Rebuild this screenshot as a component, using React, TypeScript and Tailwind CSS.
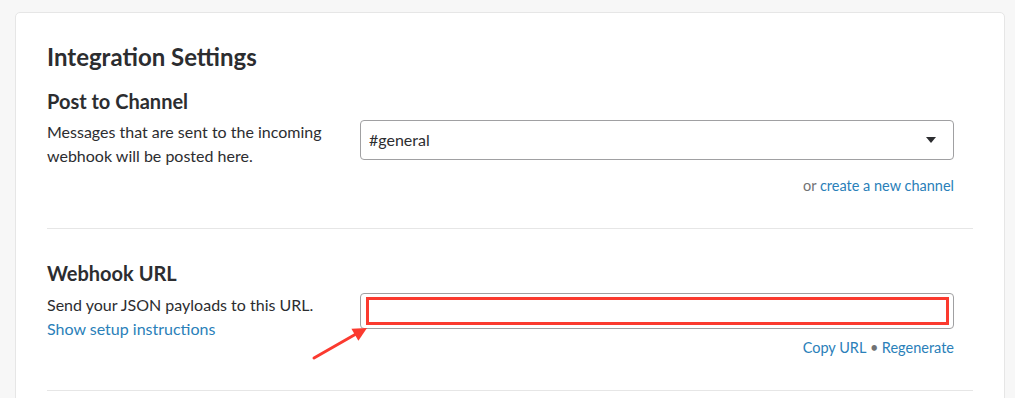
import { useState } from "react";

// Ajustes de la integración (webhook entrante)
const linkCls = "text-[#2a80b9] hover:underline cursor-pointer";

const Caret = () => (
  <svg width="10" height="6" viewBox="0 0 10 6" className="shrink-0">
    <path d="M0 0h10L5 6z" fill="#2c2d30" />
  </svg>
);

export default function App() {
  const [channel] = useState("#general");

  return (
    <div
      className="relative h-[398px] w-full overflow-hidden bg-[#f7f7f7] pl-[15px] pr-[10px] pt-[12px] text-[#2c2d30]"
      style={{ fontFamily: "Lato, 'Noto Sans', sans-serif" }}
    >
      <div className="rounded-[5px] border border-[#e6e6e6] bg-white px-[31px] pt-[29px]">
        <h1 className="text-[24px] leading-[30px] font-bold">Integration Settings</h1>

        {/* POST TO CHANNEL */}
        <section className="mt-[15px] pb-[30px] border-b border-[#e6e6e6]">
          <h2 className="text-[20px] leading-[28px] font-bold">Post to Channel</h2>
          <div className="mt-[5px] flex">
            <p className="w-[313px] text-[16px] leading-[24px]">
              Messages that are sent to the incoming webhook will be posted here.
            </p>
            <div className="w-[594px]">
              <div className="flex h-[40px] items-center justify-between rounded-[4px] border border-[#a0a0a2] pl-[8px] pr-[17px] text-[16px]">
                <span>{channel}</span>
                <Caret />
              </div>
              <div className="mt-[14px] text-right text-[14.5px] leading-[24px] text-[#717274]">
                or <span className={linkCls}>create a new channel</span>
              </div>
            </div>
          </div>
        </section>

        {/* WEBHOOK URL */}
        <section className="pt-[30px] pb-[30px] border-b border-[#e6e6e6]">
          <h2 className="text-[20px] leading-[28px] font-bold">Webhook URL</h2>
          <div className="mt-[6px] flex">
            <div className="w-[313px] text-[16px] leading-[24px]">
              <p>Send your JSON payloads to this URL.</p>
              <span className={linkCls}>Show setup instructions</span>
            </div>
            <div className="w-[594px]">
              <div className="h-[36px] rounded-[4px] border border-[#a0a0a2] pl-[5px] pr-[4px] py-[3px]">
                <div className="h-full border-[3px] border-[#fb3a2f]" />
              </div>
              <div className="mt-[7px] text-right text-[14.5px] leading-[24px] text-[#717274]">
                <span className={linkCls}>Copy URL</span>
                <span className="mx-[3.5px]">•</span>
                <span className={linkCls}>Regenerate</span>
              </div>
            </div>
          </div>
        </section>
        <div className="h-[20px]" />
      </div>

      {/* flecha de anotación */}
      <svg className="pointer-events-none absolute left-0 top-0" width="1015" height="398">
        <line x1="314" y1="358" x2="356" y2="334" stroke="#fb3a2f" strokeWidth="3" strokeLinecap="round" />
        <path d="M367 328L358.4 340.7L351.4 328.7Z" fill="#fb3a2f" />
      </svg>
    </div>
  );
}
